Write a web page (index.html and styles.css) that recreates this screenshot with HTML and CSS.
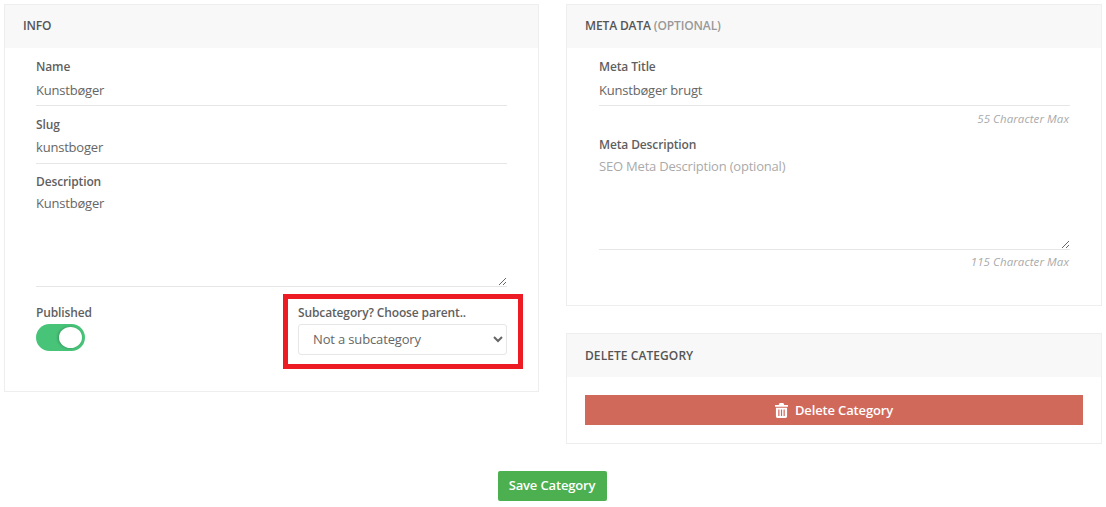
FILE: index.html
```html
<!DOCTYPE html>
<html lang="en">
<head>
<meta charset="UTF-8">
<meta name="viewport" content="width=device-width, initial-scale=1.0">
<title>Edit Category</title>
<link rel="stylesheet" href="styles.css">
</head>
<body>

<form class="columns">
    <div class="card info-card">
        <div class="card-head">INFO</div>
        <div class="card-body">
            <div class="field name-field">
                <label>Name</label>
                <input class="line-input" type="text" value="Kunstbøger">
            </div>
            <div class="field slug-field">
                <label>Slug</label>
                <input class="line-input slug-input" type="text" value="kunstboger">
            </div>
            <div class="field desc-field">
                <label>Description</label>
                <textarea class="line-input desc-input">Kunstbøger</textarea>
            </div>
            <div class="options">
                <div class="published">
                    <label>Published</label>
                    <span class="toggle"><span class="knob"></span></span>
                </div>
                <div class="parent-box">
                    <label>Subcategory? Choose parent..</label>
                    <select class="parent-select">
                        <option>Not a subcategory</option>
                    </select>
                </div>
            </div>
        </div>
    </div>

    <div class="side">
        <div class="card meta-card">
            <div class="card-head">META DATA <span class="muted">(OPTIONAL)</span></div>
            <div class="card-body">
                <div class="field name-field">
                    <label>Meta Title</label>
                    <input class="line-input" type="text" value="Kunstbøger brugt">
                    <small class="hint">55 Character Max</small>
                </div>
                <div class="field meta-desc-field">
                    <label>Meta Description</label>
                    <textarea class="line-input meta-input" placeholder="SEO Meta Description (optional)"></textarea>
                    <small class="hint">115 Character Max</small>
                </div>
            </div>
        </div>

        <div class="card delete-card">
            <div class="card-head">DELETE CATEGORY</div>
            <div class="delete-body">
                <button class="btn-delete" type="button">
                    <svg class="trash" viewBox="0 0 14 16" width="13" height="15" aria-hidden="true">
                        <path fill="#fff" fill-rule="evenodd" d="M5 0h4l1 2h4v2H0V2h4zM1 5h12v9.5A1.5 1.5 0 0 1 11.5 16h-9A1.5 1.5 0 0 1 1 14.500zM3.500 7v7h1.300V7zM6.350 7v7h1.300V7zM9.200 7v7h1.300V7z"/>
                    </svg>
                    Delete Category
                </button>
            </div>
        </div>
    </div>

    <div class="actions">
        <button class="btn-save" type="button">Save Category</button>
    </div>
</form>

</body>
</html>
```

FILE: styles.css
```css
* { box-sizing:border-box; }
body { font-family:'Open Sans',sans-serif; font-size:13px; color:#555; background:white; margin:0; padding:4px; }
.columns { display:grid; grid-template-columns:535px 536px; column-gap:27px; align-items:start; }
.card { background:white; border:1px solid #eee; }
.card-head { background:#f8f8f8; height:43px; padding:0 18px; line-height:42px; font-size:12px; font-weight:600; color:#555; letter-spacing:-.13px; }
.muted { color:#999; }
.card-body { padding:0 31px; }
.meta-card .card-body { padding-left:32px; }
.field label, .options label { display:block; font-size:12px; font-weight:600; color:#5f5f5f; line-height:16px; letter-spacing:-.13px; }
.line-input { display:block; width:100%; border:none; border-bottom:1px solid #e6e6e6; outline:none; padding:0; font-family:'Open Sans',sans-serif; font-size:13px; color:#666; background:transparent; letter-spacing:-.2px; }
input.line-input { height:30px; margin-top:1px; padding-bottom:2px; }
input.slug-input { padding-bottom:4px; }
textarea.line-input { padding-top:4px; line-height:18px; }
textarea.line-input::placeholder { color:#aaa; opacity:1; }
.name-field { padding-top:11px; }
.slug-field { padding-top:11px; }
.desc-field { padding-top:10px; }
.desc-input { height:97px; }
.options { display:flex; justify-content:space-between; align-items:flex-start; margin-top:7px; margin-right:-16px; padding-bottom:22px; }
.published { padding-top:11px; }
.toggle { display:block; width:49px; height:27px; margin-top:3px; padding:3px; background:#48c479; border-radius:14px; }
.knob { display:block; width:23px; height:21px; margin-left:20px; background:white; border-radius:50%; box-shadow:-1px 0 3px rgba(0,0,0,.25); }
.parent-box { width:240px; border:5px solid #ed1c24; padding:6px 10px 9px; }
.parent-select { display:block; width:209px; height:31px; margin-top:3px; padding:0 10px 2px; border:1px solid #e6e6e6; border-radius:3px; background:white; font-family:'Open Sans',sans-serif; font-size:13px; color:#666; letter-spacing:-.15px; }
.hint { display:block; text-align:right; font-size:11.5px; font-style:italic; color:#aaa; line-height:14px; margin-top:6px; padding-right:1px; letter-spacing:.08px; }
.meta-desc-field { padding-top:11px; padding-bottom:36px; }
.meta-desc-field .hint { margin-top:5px; }
.meta-input { height:97px; }
.meta-card { height:302px; }
.delete-card { margin-top:27px; height:111px; }
.delete-card .card-head { line-height:43px; letter-spacing:.07px; }
.delete-body { padding:18px; }
.btn-delete { display:flex; align-items:center; justify-content:center; gap:7px; width:100%; height:30px; border:none; background:#d1695b; color:white; font-family:'Open Sans',sans-serif; font-size:13px; font-weight:600; letter-spacing:-.15px; cursor:pointer; }
.trash { display:block; }
.actions { grid-column:1 / -1; display:flex; justify-content:center; margin-top:27px; padding-right:2px; }
.btn-save { height:30px; width:109px; padding:0 0 2px; border:none; border-radius:2px; background:#4caf50; color:white; font-family:'Open Sans',sans-serif; font-size:13px; font-weight:600; letter-spacing:-.15px; cursor:pointer; }
```
